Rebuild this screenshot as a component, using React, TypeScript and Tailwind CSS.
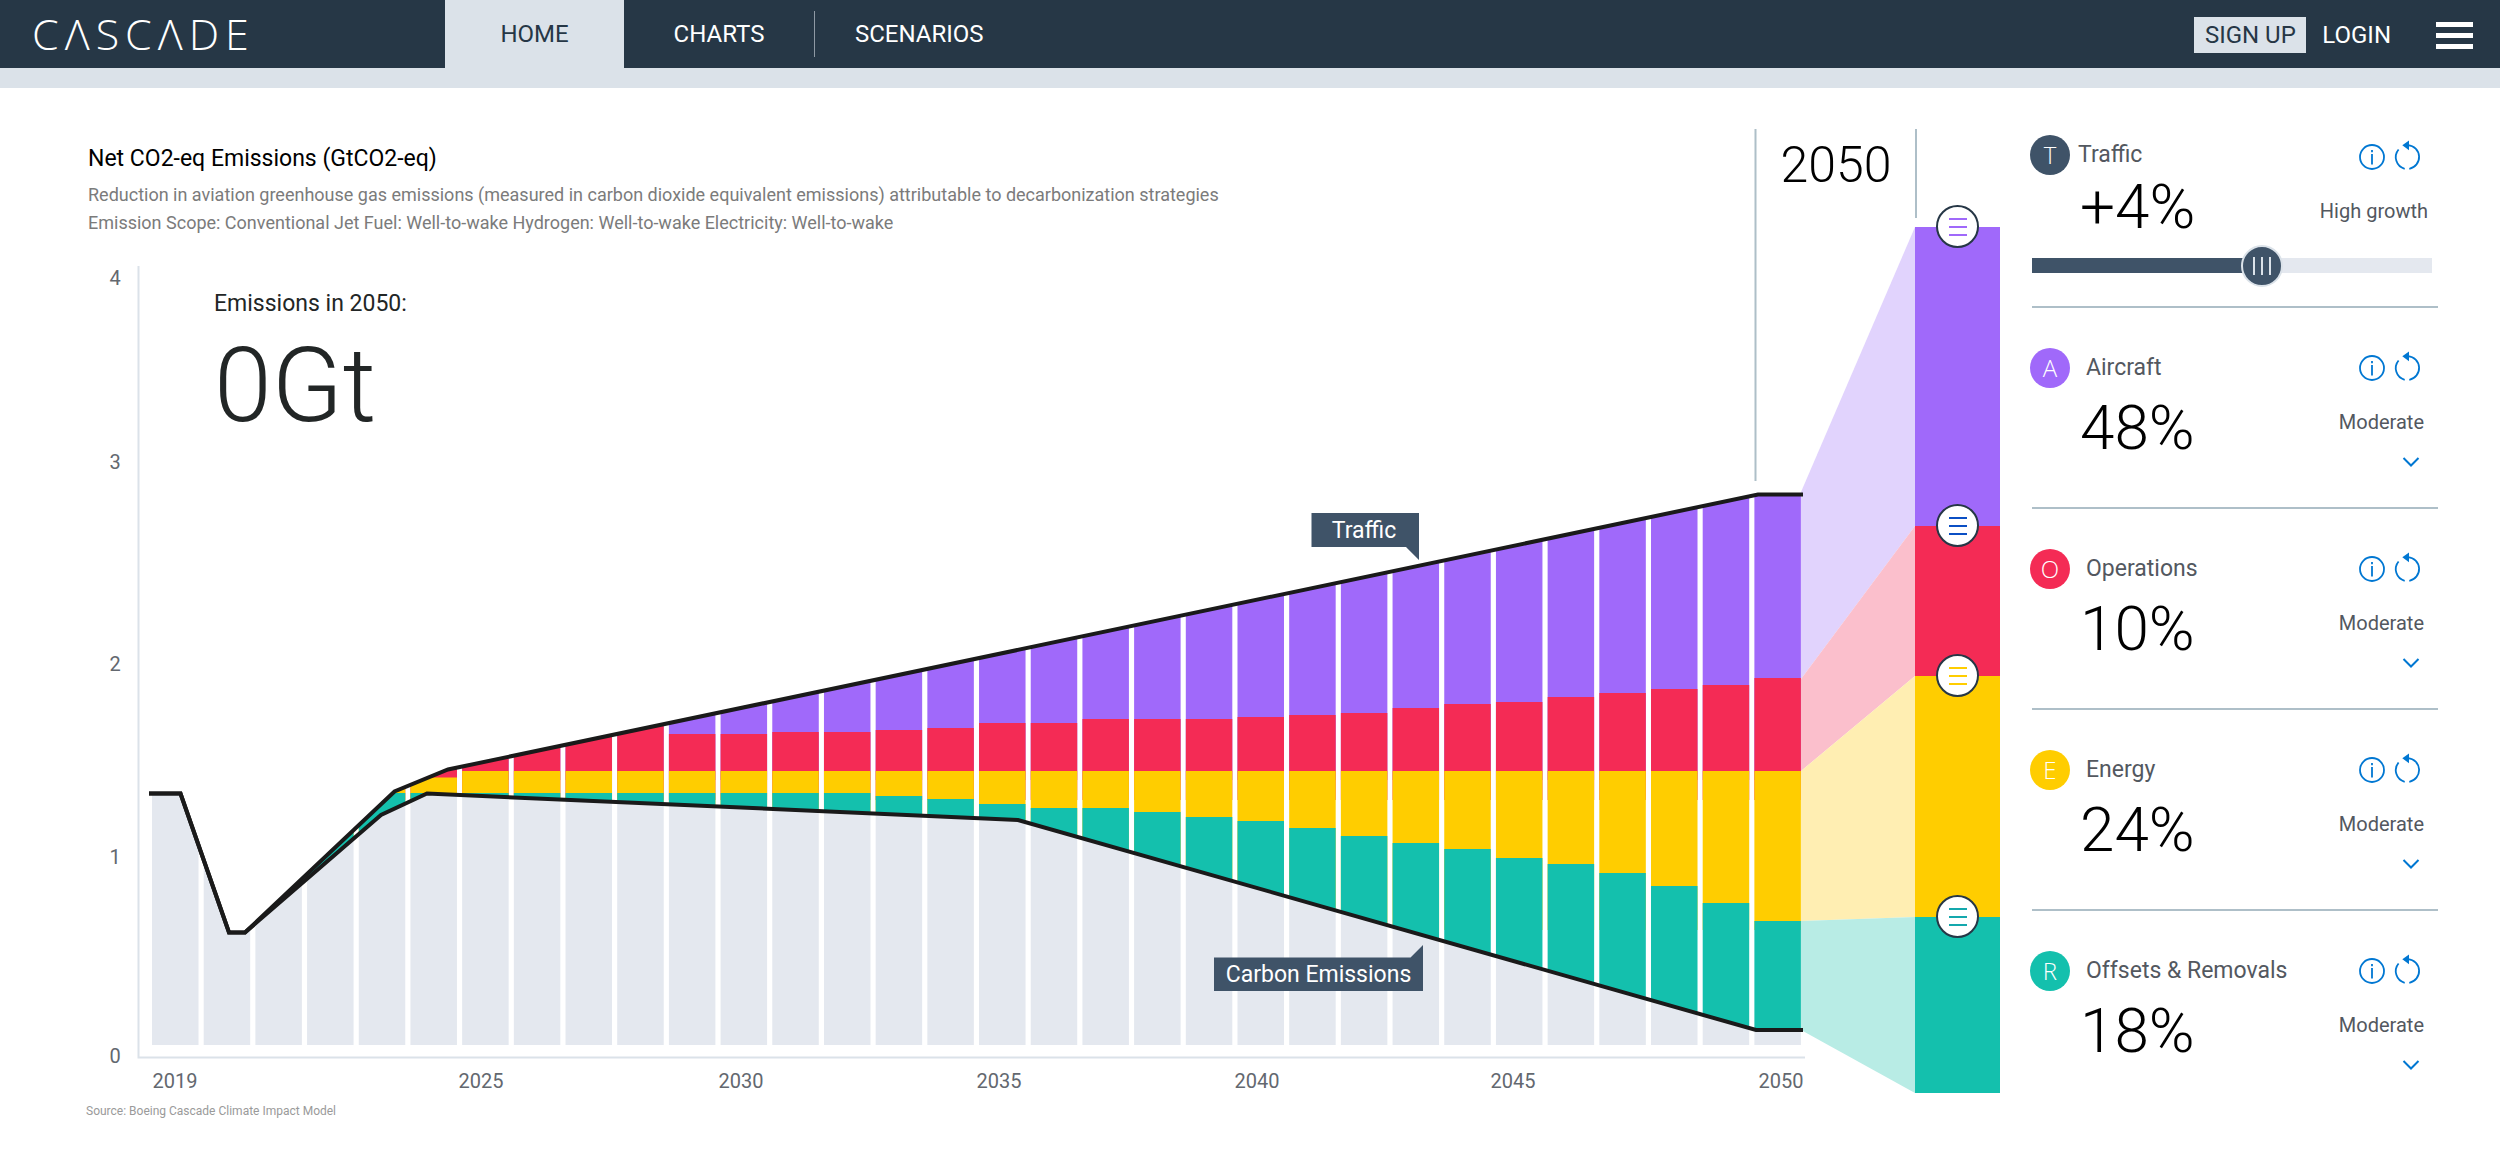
import React, { useState } from "react";
import { clsx } from "clsx";

interface Strategy {
  id: string;
  letter: string;
  label: string;
  value: string;
  level: string;
  badge: string;
}

const strategies: Strategy[] = [
  { id: "aircraft", letter: "A", label: "Aircraft", value: "48%", level: "Moderate", badge: "bg-[#a069fa]" },
  { id: "operations", letter: "O", label: "Operations", value: "10%", level: "Moderate", badge: "bg-[#f42b55]" },
  { id: "energy", letter: "E", label: "Energy", value: "24%", level: "Moderate", badge: "bg-[#ffcd00]" },
  { id: "removals", letter: "R", label: "Offsets & Removals", value: "18%", level: "Moderate", badge: "bg-[#14c0ad]" },
];

const segments = [
  { id: "aircraft", size: "flex-[299]", color: "bg-[#a069fa]", lines: "text-[#a069fa]" },
  { id: "operations", size: "flex-[150]", color: "bg-[#f42b55]", lines: "text-[#0b4fc4]" },
  { id: "energy", size: "flex-[241]", color: "bg-[#ffcd00]", lines: "text-[#ffcd00]" },
  { id: "removals", size: "flex-[176]", color: "bg-[#14c0ad]", lines: "text-[#14a8ad]" },
];

// One bar per year, 2019 - 2050
const BAR_COUNT = 32;
const BAR_START = 152;
const BAR_STEP = 51.69;
const BAR_WIDTH = 46.5;

// Top edge of the operations band, from 2029 on
const operationsTop = [
  734, 734, 732, 732, 730, 728, 723, 723, 719, 719, 719, 717, 715, 713, 708, 704, 702, 697, 693, 689, 685, 678,
];
// Top edge of the removals band, from 2033 on
const removalsTop = [
  796, 799, 804, 808, 808, 812, 817, 821, 828, 836, 843, 849, 858, 864, 873, 886, 903, 921,
];

const trafficLine = "149,793.5 180.5,793.5 229,932.5 245,932.5 394.5,791.5 448,769.5 1758,494.5 1803,494.5";
const carbonLine = "149,793.5 180.5,793.5 229,932.5 245,932.5 381,815 427,793.5 1018,820 1756,1030 1803,1030";

const yTicks = [
  { label: "4", y: 285 },
  { label: "3", y: 469 },
  { label: "2", y: 671 },
  { label: "1", y: 864 },
  { label: "0", y: 1063 },
];

const xTicks = [
  { label: "2019", x: 175 },
  { label: "2025", x: 481 },
  { label: "2030", x: 741 },
  { label: "2035", x: 999 },
  { label: "2040", x: 1257 },
  { label: "2045", x: 1513 },
  { label: "2050", x: 1781 },
];

function InfoIcon() {
  return (
    <svg viewBox="0 0 28 28" className="size-7" fill="none" stroke="currentColor" strokeWidth="1.8">
      <circle cx="14" cy="14" r="12" />
      <path d="M14 11v10.500M14 7v2.200" />
    </svg>
  );
}

function ResetIcon() {
  return (
    <svg viewBox="0 0 28 34" className="h-[34px] w-7" fill="none" stroke="currentColor" strokeWidth="1.8">
      <path d="M5.600 9.500A12 12 0 0 0 11.700 28.800" />
      <path d="M16.300 28.800A12 12 0 0 0 15 5.040" />
      <path d="M9.300 5.200 16 .5v9.800z" fill="currentColor" stroke="none" />
    </svg>
  );
}

function CardActions({ label }: { label: string }) {
  return (
    <div className="flex h-10 items-center gap-[7px] text-[#0077d2]">
      <button type="button" aria-label={`About ${label}`}>
        <InfoIcon />
      </button>
      <button type="button" aria-label={`Reset ${label}`}>
        <ResetIcon />
      </button>
    </div>
  );
}

function Badge({ letter, color }: { letter: string; color: string }) {
  return (
    <span
      className={clsx(
        "flex size-10 items-center justify-center rounded-full font-['Open_Sans',sans-serif] text-2xl leading-10 font-light text-white",
        color,
      )}
    >
      {letter}
    </span>
  );
}

function TrafficCard() {
  const [growth, setGrowth] = useState(7);
  const fill = 21 + (growth / 12) * 358;

  return (
    <section className="ml-[2px] h-[179px] border-b-2 border-[#aebfc8]">
      <div className="-ml-[2px] flex justify-between pt-[6px]">
        <div>
          <div className="flex items-center gap-2">
            <Badge letter="T" color="bg-[#3f5368]" />
            <h2 className="text-[23px] leading-10 text-[#53585f]">Traffic</h2>
          </div>
          <p className="pl-[50px] text-[62px] leading-[64px] font-light">+4%</p>
        </div>
        <div className="flex flex-col items-end pr-[10px]">
          <div className="pt-[2px] pr-[7px]">
            <CardActions label="Traffic" />
          </div>
          <p className="pt-[22px] text-xl leading-6 text-[#53585f]">High growth</p>
        </div>
      </div>
      <input
        type="range"
        min={0}
        max={12}
        value={growth}
        onChange={(e) => setGrowth(Number(e.target.value))}
        aria-label="Traffic growth"
        style={{ backgroundImage: `linear-gradient(90deg, #3f5368 ${fill / 4}%, #e4e8ef ${fill / 4}%)` }}
        className="mt-[19px] block h-[15px] w-[400px] appearance-none [&::-webkit-slider-thumb]:size-[42px] [&::-webkit-slider-thumb]:appearance-none [&::-webkit-slider-thumb]:rounded-full [&::-webkit-slider-thumb]:border-2 [&::-webkit-slider-thumb]:border-[#dbe2e9] [&::-webkit-slider-thumb]:bg-[#3f5368] [&::-webkit-slider-thumb]:bg-[image:repeating-linear-gradient(90deg,#dbe2e9_0_2px,transparent_2px_8px)] [&::-webkit-slider-thumb]:bg-[length:18px_18px] [&::-webkit-slider-thumb]:bg-center [&::-webkit-slider-thumb]:bg-no-repeat"
      />
    </section>
  );
}

function StrategyCard({ strategy }: { strategy: Strategy }) {
  return (
    <section className="ml-[2px] h-[201px] border-b-2 border-[#aebfc8] last:border-b-0">
      <div className="-ml-[2px] flex justify-between pt-10">
        <div>
          <div className="flex items-center gap-4">
            <Badge letter={strategy.letter} color={strategy.badge} />
            <h2 className="text-[23px] leading-10 text-[#53585f]">{strategy.label}</h2>
          </div>
          <p className="pt-2 pl-[50px] text-[62px] leading-[64px] font-light">{strategy.value}</p>
        </div>
        <div className="flex flex-col items-end pr-[14px]">
          <div className="pr-[3px]">
            <CardActions label={strategy.label} />
          </div>
          <p className="pt-[22px] text-xl leading-6 text-[#53585f]">{strategy.level}</p>
          <button
            type="button"
            aria-label={`Show ${strategy.label} options`}
            className="mt-[22px] mr-1 text-[#0077d2]"
          >
            <svg viewBox="0 0 18 12" className="h-3 w-[18px]" fill="none" stroke="currentColor" strokeWidth="2">
              <path d="M1.500 2 9 9.500 16.500 2" />
            </svg>
          </button>
        </div>
      </div>
    </section>
  );
}

function EmissionsChart() {
  const bars = Array.from({ length: BAR_COUNT }, (_, i) => ({
    x: BAR_START + i * BAR_STEP,
    // before 2029 the operations band runs up to the traffic line
    operations: i >= 10 ? operationsTop[i - 10] : 480,
    energy: i === 5 ? 777.5 : i < 5 ? 700 : 771,
    removals: i >= 14 ? removalsTop[i - 14] : 793,
  }));

  return (
    <svg
      viewBox="86 129 1829 989"
      className="col-start-1 row-start-1 block h-auto w-full font-[Roboto,sans-serif]"
      role="img"
      aria-label="Net CO2-eq emissions by year, 2019 to 2050"
    >
      <defs>
        <clipPath id="wedge">
          <polygon points="245,932.5 394.5,791.5 448,769.5 1758,494.5 1801,494.5 1801,1030 1756,1030 1018,820 427,793.5 381,815" />
        </clipPath>
        <clipPath id="base">
          <polygon points={`${carbonLine} 1803,1045 149,1045`} />
        </clipPath>
      </defs>

      <path d="M138.500 266V1057.500H1805" fill="none" stroke="#dbe2e9" strokeWidth="2" />

      <g clipPath="url(#base)" fill="#e4e8ef">
        {bars.map((bar) => (
          <rect key={bar.x} x={bar.x} y="780" width={BAR_WIDTH} height="265" />
        ))}
      </g>

      <g clipPath="url(#wedge)">
        {bars.map((bar) => (
          <g key={bar.x}>
            <rect x={bar.x} y="480" width={BAR_WIDTH} height="300" fill="#a069fa" />
            <rect x={bar.x} y={bar.operations} width={BAR_WIDTH} height={800 - bar.operations} fill="#f42b55" />
            <rect x={bar.x} y={bar.energy} width={BAR_WIDTH} height={930 - bar.energy} fill="#ffcd00" />
            <rect x={bar.x} y={bar.removals} width={BAR_WIDTH} height={1040 - bar.removals} fill="#14c0ad" />
          </g>
        ))}
      </g>

      {/* Fan out from the last bar to the 2050 column */}
      <polygon points="1801,492 1915,227 1915,526 1801,679" fill="#e1d3fd" />
      <polygon points="1801,679 1915,526 1915,676 1801,771" fill="#fbbfcc" />
      <polygon points="1801,771 1915,676 1915,917 1801,921" fill="#ffeeb2" />
      <polygon points="1801,921 1915,917 1915,1093 1801,1030" fill="#b8ece5" />

      <path d="M1755.500 129V481" stroke="#aebfc8" strokeWidth="2" />

      <g fill="none" stroke="#1a1a1a" strokeWidth="4">
        <polyline points={trafficLine} />
        <polyline points={carbonLine} />
      </g>

      <g fill="#3f5368">
        <path d="M1311.500 513H1419V560L1406 547H1311.500z" />
        <path d="M1214 957.500H1410.500L1423 945V991H1214z" />
      </g>
      <g fill="#fff" fontSize="23" textAnchor="middle">
        <text x="1364" y="538">Traffic</text>
        <text x="1318.500" y="982">Carbon Emissions</text>
      </g>

      <g fill="#63686f" fontSize="20" textAnchor="middle">
        {yTicks.map((tick) => (
          <text key={tick.label} x="115" y={tick.y}>
            {tick.label}
          </text>
        ))}
        {xTicks.map((tick) => (
          <text key={tick.label} x={tick.x} y="1088">
            {tick.label}
          </text>
        ))}
      </g>
      <text x="1836" y="182" fontSize="50" fontWeight="300" textAnchor="middle">
        2050
      </text>
      <text x="86" y="1115" fontSize="12" fill="#9a9a9a">
        Source: Boeing Cascade Climate Impact Model
      </text>
    </svg>
  );
}

function Column2050() {
  return (
    <div className="flex w-[85px] flex-col">
      <div className="flex-[89] border-l-2 border-[#aebfc8]" />
      <div className="flex-[9]" />
      {segments.map((segment) => (
        <div key={segment.id} className={clsx("relative", segment.size, segment.color)}>
          <button
            type="button"
            aria-label={`Adjust ${segment.id}`}
            className={clsx(
              "absolute -top-[22px] left-[21px] flex size-[43px] flex-col items-center justify-center gap-[6px] rounded-full border-2 border-[#263746] bg-white",
              segment.lines,
            )}
          >
            <span className="h-[2px] w-[18px] bg-current" />
            <span className="h-[2px] w-[18px] bg-current" />
            <span className="h-[2px] w-[18px] bg-current" />
          </button>
        </div>
      ))}
      <div className="flex-[25]" />
    </div>
  );
}

function Header() {
  return (
    <header className="border-b-[20px] border-[#dbe2e9] bg-[#263746] text-white">
      <div className="flex h-[68px] items-center">
        <a
          href="#"
          aria-label="Cascade"
          className="flex w-[445px] gap-[6px] pl-8 font-['Open_Sans',sans-serif] text-[43px] leading-[68px] font-light"
        >
          {Array.from("CΛSCΛDE").map((letter, i) => (
            <span key={i}>{letter}</span>
          ))}
        </a>
        <nav className="flex h-full items-center text-2xl">
          <a href="#" aria-current="page" className="w-[179px] bg-[#dbe2e9] text-center leading-[72px] text-[#263746]">
            HOME
          </a>
          <a href="#" className="w-[190px] text-center leading-[72px]">
            CHARTS
          </a>
          <span className="h-[46px] w-px bg-[#8e99a4]" />
          <a href="#" className="pl-10 leading-[72px]">
            SCENARIOS
          </a>
        </nav>
        <div className="ml-auto flex items-center pt-[2px] pr-[27px] text-2xl">
          <button type="button" className="h-9 w-28 bg-[#dbe2e9] text-[#263746]">
            SIGN UP
          </button>
          <button type="button" className="ml-4">
            LOGIN
          </button>
          <button type="button" aria-label="Menu" className="ml-[45px] flex flex-col gap-[6px]">
            <span className="h-[5px] w-[37px] bg-white" />
            <span className="h-[5px] w-[37px] bg-white" />
            <span className="h-[5px] w-[37px] bg-white" />
          </button>
        </div>
      </div>
    </header>
  );
}

export default function App() {
  return (
    <div className="min-h-screen bg-white font-[Roboto,sans-serif] text-black">
      <Header />
      <main className="flex items-start pt-[41px] pr-[62px] pl-[86px]">
        <div className="flex flex-1">
          <div className="grid flex-1">
            <EmissionsChart />
            <div className="col-start-1 row-start-1 pt-4 pl-[2px]">
              <h1 className="text-[23px] leading-7">Net CO2-eq Emissions (GtCO2-eq)</h1>
              <p className="pt-2 text-lg leading-7 text-[#7b7b7b]">
                Reduction in aviation greenhouse gas emissions (measured in carbon dioxide equivalent emissions)
                attributable to decarbonization strategies
                <br />
                Emission Scope: Conventional Jet Fuel: Well-to-wake Hydrogen: Well-to-wake Electricity: Well-to-wake
              </p>
              <div className="pt-[53px] pl-[126px] text-[#222626]">
                <p className="text-[23px] leading-7">Emissions in 2050:</p>
                <p className="pt-1 text-[104px] leading-[128px] font-light">0Gt</p>
              </div>
            </div>
          </div>
          <Column2050 />
        </div>
        <aside className="ml-[30px] w-[408px]">
          <TrafficCard />
          {strategies.map((strategy) => (
            <StrategyCard key={strategy.id} strategy={strategy} />
          ))}
        </aside>
      </main>
    </div>
  );
}
